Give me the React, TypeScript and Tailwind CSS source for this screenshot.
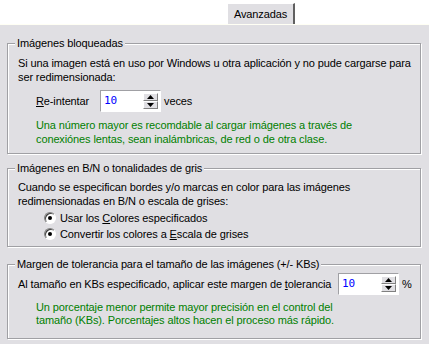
import React from 'react';

const font = { fontFamily: '"Liberation Sans", Arial, sans-serif' };

function GroupBox({ title, h, mt, children }: { title: string; h: string; mt: string; children: React.ReactNode }) {
  return (
    <div
      className={`mx-[7px] w-[414px] border border-[#a0a0a4] shadow-[inset_1px_1px_0_#ffffff,1px_1px_0_#ffffff] ${h} ${mt}`}
    >
      <div className="-mt-[7px] ml-[7px] w-fit bg-[#e0dfe3] px-[2px] text-[11px] leading-[13px] text-black">
        {title}
      </div>
      {children}
    </div>
  );
}

function SpinBox({ value }: { value: string }) {
  return (
    <div className="flex h-[22px] w-[61px] shrink-0 border border-t-[#a0a0a4] border-l-[#a0a0a4] border-b-white border-r-white bg-white">
      <div className="flex flex-1 items-center pl-[3px] text-[11px] text-[#0000ff]" style={{ fontFamily: '"DejaVu Sans Mono", monospace' }}>
        {value}
      </div>
      <div className="my-[2px] mr-[2px] flex w-[15px] flex-col">
        <SpinButton up />
        <SpinButton />
      </div>
    </div>
  );
}

function SpinButton({ up }: { up?: boolean }) {
  return (
    <div className="flex flex-1 items-center justify-center border border-t-white border-l-white border-b-[#808080] border-r-[#808080] bg-[#e0dfe3]">
      <svg width="7" height="4" viewBox="0 0 7 4">
        {up ? <polygon points="3.5,0 7,4 0,4" fill="#000" /> : <polygon points="0,0 7,0 3.5,4" fill="#000" />}
      </svg>
    </div>
  );
}

function Radio({ children }: { children: React.ReactNode }) {
  return (
    <div className="flex h-[16px] items-center">
      <div className="ml-[36px] flex h-[12px] w-[12px] items-center justify-center rounded-full border border-t-[#808080] border-l-[#808080] border-b-white border-r-white bg-white shadow-[inset_1px_1px_0_#404040]">
        <div className="h-[4px] w-[4px] rounded-full bg-black" />
      </div>
      <span className="ml-[4px]">{children}</span>
    </div>
  );
}

export default function App() {
  return (
    <div className="h-[344px] w-[429px] overflow-hidden whitespace-nowrap bg-white text-[11px] tracking-[-0.12px] text-black" style={font}>
      <div className="flex h-[24px] items-end">
        <div className="ml-[227px] flex h-[21px] w-[68px] items-center justify-center border-t border-l border-r-2 border-t-white border-l-white border-r-[#606060] bg-[#e0dfe3] leading-[13px]">
          Avanzadas
        </div>
      </div>
      <div className="h-[320px] border-t border-[#fffff4] bg-[#e0dfe3] pt-px">
        <GroupBox title="Imágenes bloqueadas" h="h-[111px]" mt="mt-[17px]">
          <div className="mt-[6px] pl-[10px] leading-[14px]">
            <div>Si una imagen está en uso por Windows u otra aplicación y no pude cargarse para</div>
            <div>ser redimensionada:</div>
          </div>
          <div className="mt-[6px] flex items-center pl-[28px]">
            <span className="w-[64px]">
              <u>R</u>e-intentar
            </span>
            <SpinBox value="10" />
            <span className="ml-[3px]">veces</span>
          </div>
          <div className="mt-[6px] pl-[28px] leading-[14px] text-[#008000]">
            <div>Una número mayor es recomdable al cargar imágenes a través de</div>
            <div>conexiónes lentas, sean inalámbricas, de red o de otra clase.</div>
          </div>
        </GroupBox>
        <GroupBox title="Imágenes en B/N o tonalidades de gris" h="h-[79px]" mt="mt-[14px]">
          <div className="mt-[5px] pl-[10px] leading-[14px]">
            <div>Cuando se especifican bordes y/o marcas en color para las imágenes</div>
            <div>redimensionadas en B/N o escala de grises:</div>
          </div>
          <div className="mt-[2px]">
            <Radio>
              Usar los <u>C</u>olores especificados
            </Radio>
            <Radio>
              Convertir los colores a <u>E</u>scala de grises
            </Radio>
          </div>
        </GroupBox>
        <GroupBox title="Margen de tolerancia para el tamaño de las imágenes (+/- KBs)" h="h-[75px]" mt="mt-[17px]">
          <div className="mt-[2px] flex items-center pl-[10px]">
            <span className="w-[320px]">
              Al tamaño en KBs especificado, aplicar este margen de <u>t</u>olerancia
            </span>
            <SpinBox value="10" />
            <span className="ml-[3px]">%</span>
          </div>
          <div className="mt-[6px] pl-[28px] leading-[13px] text-[#008000]">
            <div>Un porcentaje menor permite mayor precisión en el control del</div>
            <div>tamaño (KBs). Porcentajes altos hacen el proceso más rápido.</div>
          </div>
        </GroupBox>
      </div>
    </div>
  );
}
